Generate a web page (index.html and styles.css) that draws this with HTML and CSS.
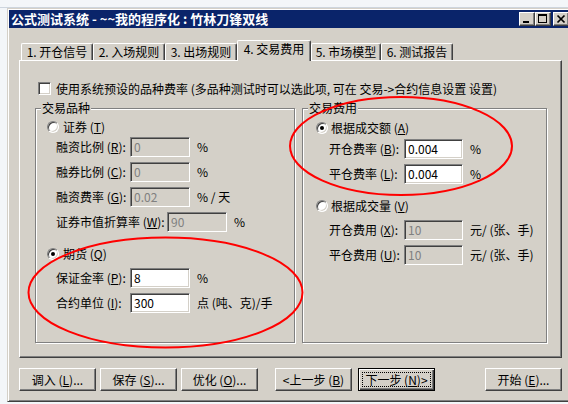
FILE: index.html
```html
<html lang="zh">

<head>
    <title>公式测试系统</title>
    <link rel="stylesheet" href="styles.css">
</head>

<body>
    <div class="window">
        <div class="titlebar">
            <span class="caption">公式测试系统 - ~~我的程序化 : 竹林刀锋双线</span>
            <span class="tbtn">
                <svg width="14" height="12" viewBox="0 0 14 12"><rect x="3" y="8" width="6" height="2" fill="#000"/></svg>
            </span>
            <span class="tbtn">
                <svg width="14" height="12" viewBox="0 0 14 12"><path d="M2 1h9v9H2z M3 3v6h7V3z" fill="#000" fill-rule="evenodd"/></svg>
            </span>
            <span class="tbtn close">
                <svg width="14" height="12" viewBox="0 0 14 12"><path d="M3.5 2.5l7 7M10.5 2.5l-7 7" stroke="#000" stroke-width="1.7"/></svg>
            </span>
        </div>

        <div class="main">
            <div class="tabs">
                <div class="tab">1. 开仓信号</div>
                <div class="tab">2. 入场规则</div>
                <div class="tab">3. 出场规则</div>
                <div class="tab active">4. 交易费用</div>
                <div class="tab narrow">5. 市场模型</div>
                <div class="tab">6. 测试报告</div>
            </div>

            <div class="panel">
                <div class="check-row">
                    <span class="checkbox"></span>
                    <span>使用系统预设的品种费率 (多品种测试时可以选此项, 可在 交易-&gt;合约信息设置 设置)</span>
                </div>

                <div class="groups">
                    <div class="group left">
                        <div class="group-title">交易品种</div>
                        <div class="radio-row first">
                            <span class="radio"></span>
                            <span>证券 (<u>T</u>)</span>
                        </div>
                        <div class="field top">
                            <label>融资比例 (<u>R</u>):</label>
                            <input class="box" type="text" value="0" disabled>
                            <span class="unit">%</span>
                        </div>
                        <div class="field">
                            <label>融券比例 (<u>C</u>):</label>
                            <input class="box" type="text" value="0" disabled>
                            <span class="unit">%</span>
                        </div>
                        <div class="field">
                            <label>融资费率 (<u>G</u>):</label>
                            <input class="box" type="text" value="0.02" disabled>
                            <span class="unit">% / 天</span>
                        </div>
                        <div class="field">
                            <label class="wide">证券市值折算率 (<u>W</u>):</label>
                            <input class="box" type="text" value="90" disabled>
                            <span class="unit">%</span>
                        </div>
                        <div class="radio-row">
                            <span class="radio on"></span>
                            <span>期货 (<u>Q</u>)</span>
                        </div>
                        <div class="field after-radio">
                            <label>保证金率 (<u>P</u>):</label>
                            <input class="box" type="text" value="8">
                            <span class="unit">%</span>
                        </div>
                        <div class="field">
                            <label>合约单位 (<u>I</u>):</label>
                            <input class="box" type="text" value="300">
                            <span class="unit">点 (吨、克)/手</span>
                        </div>
                    </div>

                    <div class="group right">
                        <div class="group-title">交易费用</div>
                        <div class="radio-row first">
                            <span class="radio on"></span>
                            <span>根据成交额 (<u>A</u>)</span>
                        </div>
                        <div class="field top">
                            <label>开仓费率 (<u>B</u>):</label>
                            <input class="box" type="text" value="0.004">
                            <span class="unit">%</span>
                        </div>
                        <div class="field">
                            <label>平仓费率 (<u>L</u>):</label>
                            <input class="box" type="text" value="0.004">
                            <span class="unit">%</span>
                        </div>
                        <div class="radio-row">
                            <span class="radio"></span>
                            <span>根据成交量 (<u>V</u>)</span>
                        </div>
                        <div class="field after-radio">
                            <label>开仓费用 (<u>X</u>):</label>
                            <input class="box" type="text" value="10" disabled>
                            <span class="unit">元/ (张、手)</span>
                        </div>
                        <div class="field">
                            <label>平仓费用 (<u>U</u>):</label>
                            <input class="box" type="text" value="10" disabled>
                            <span class="unit">元/ (张、手)</span>
                        </div>
                    </div>
                </div>
            </div>

            <div class="actions">
                <button class="btn">调入 (<u>L</u>)...</button>
                <button class="btn">保存 (<u>S</u>)...</button>
                <button class="btn">优化 (<u>O</u>)...</button>
                <button class="btn prev">&lt;上一步 (<u>B</u>)</button>
                <button class="btn next"><span class="focus">下一步 (<u>N</u>)&gt;</span></button>
                <button class="btn start">开始 (<u>E</u>)...</button>
            </div>
        </div>
    </div>

    <!-- red marks drawn over the screenshot -->
    <svg class="marks" width="568" height="404" viewBox="0 0 568 404">
        <ellipse cx="165.5" cy="292.5" rx="137" ry="55" fill="none" stroke="#ff0000" stroke-width="2"/>
        <ellipse cx="401" cy="146" rx="111" ry="49" fill="none" stroke="#ff0000" stroke-width="2"/>
    </svg>
</body>

</html>
```

FILE: styles.css
```css
* {
    box-sizing: border-box;
}

body {
    margin: 0;
    width: 568px;
    height: 404px;
    overflow: hidden;
    position: relative;
    background: linear-gradient(#f3f6f9 0 7px, #cdd5de 7px 8px, #f3f6f9 8px);
    font-family: "Noto Sans CJK SC", "Liberation Sans", sans-serif;
    font-size: 12px;
    line-height: 14px;
    color: #000;
}

.window {
    margin: 8px 0 0 7px;
    width: 567px;
    height: 394px;
    padding: 1px;
    background: #d4d0c8;
    border: 1px solid;
    border-color: #d4d0c8 #404040 #404040 #d4d0c8;
    box-shadow: inset 1px 1px #fff, inset -1px -1px #808080;
}

.titlebar {
    height: 18px;
    display: flex;
    align-items: center;
    padding: 0 3px 0 2px;
    background: #0a246a;
    color: #fff;
    font-size: 13px;
    font-weight: bold;
}

.caption {
    flex: 1;
    white-space: nowrap;
}

.tbtn {
    width: 16px;
    height: 14px;
    display: flex;
    background: #d4d0c8;
    border: 1px solid;
    border-color: #fff #404040 #404040 #fff;
    box-shadow: inset -1px -1px #808080;
}

.tbtn.close {
    margin-left: 2px;
}

.main {
    padding: 12px 10px 0;
}

/* tab strip */
.tabs {
    position: relative;
    z-index: 1;
    height: 20px;
    display: flex;
    align-items: flex-end;
    padding-left: 2px;
}

.tab {
    width: 72px;
    height: 17px;
    border: 1px solid;
    border-bottom: none;
    border-color: #fff #404040 #fff #fff;
    border-radius: 2px 2px 0 0;
    box-shadow: inset -1px 0 #808080;
    background: #d4d0c8;
    text-align: center;
    line-height: 16px;
    white-space: nowrap;
}

.tab.narrow {
    width: 70px;
}

.tab.active {
    width: 74px;
    height: 21px;
    margin-bottom: -1px;
    line-height: 16px;
}

.panel {
    height: 298px;
    padding: 21px 14px 0 15px;
    border: 1px solid;
    border-color: #fff #404040 #404040 #fff;
    box-shadow: inset -1px -1px #808080;
}

.check-row {
    height: 13px;
    display: flex;
    align-items: center;
    gap: 5px;
    margin-left: 3px;
    white-space: nowrap;
}

.checkbox {
    width: 13px;
    height: 13px;
    flex: none;
    background: #fff;
    border: 1px solid;
    border-color: #808080 #fff #fff #808080;
    box-shadow: inset 1px 1px #404040, inset -1px -1px #d4d0c8;
}

/* group boxes */
.groups {
    display: flex;
    gap: 7px;
    margin-top: 13px;
}

.group {
    height: 235px;
    border: 1px solid #808080;
    box-shadow: inset 1px 1px #fff, 1px 1px #fff;
}

.group.left {
    width: 260px;
}

.group.right {
    width: 245px;
}

.group-title {
    width: fit-content;
    margin: -8px 0 -6px 5px;
    padding: 0 1px;
    background: #d4d0c8;
}

.radio-row {
    height: 14px;
    display: flex;
    align-items: center;
    gap: 4px;
    margin: 15px 0 0 11px;
}

.radio-row.first {
    margin-top: 11px;
}

.right .radio-row {
    margin-left: 13px;
    gap: 3px;
}

.right .radio-row.first {
    margin-top: 12px;
}

.radio {
    width: 12px;
    height: 12px;
    flex: none;
    display: flex;
    align-items: center;
    justify-content: center;
    border-radius: 50%;
    background: #fff;
    border: 1px solid;
    border-color: #808080 #fff #fff #808080;
    box-shadow: inset 1px 1px #404040, inset -1px -1px #d4d0c8;
}

.radio.on::after {
    content: "";
    width: 4px;
    height: 4px;
    border-radius: 50%;
    background: #000;
}

.field {
    height: 20px;
    display: flex;
    align-items: center;
    margin: 5px 0 0 20px;
    white-space: nowrap;
}

.field.top {
    margin-top: 3px;
}

.field.after-radio {
    margin-top: 7px;
}

.right .field {
    margin-left: 26px;
}

.right .field.top {
    margin-top: 4px;
}

.field label {
    width: 74px;
    flex: none;
}

.field label.wide {
    width: 111px;
}

.right .field label {
    width: 75px;
}

.box {
    width: 60px;
    height: 20px;
    flex: none;
    margin: 0;
    padding: 0 3px 2px;
    font: inherit;
    color: #000;
    background: #fff;
    border: 1px solid;
    border-color: #808080 #fff #fff #808080;
    box-shadow: inset 1px 1px #404040, inset -1px -1px #d4d0c8;
    outline: none;
}

.right .box {
    width: 59px;
}

.box:disabled {
    color: #808080;
    background: #d4d0c8;
}

.unit {
    margin-left: 7px;
}

/* bottom buttons */
.actions {
    display: flex;
    margin-top: 10px;
}

.btn {
    width: 77px;
    height: 23px;
    padding: 0;
    font: inherit;
    color: #000;
    background: #d4d0c8;
    border: 1px solid;
    border-color: #fff #404040 #404040 #fff;
    box-shadow: inset -1px -1px #808080;
    white-space: nowrap;
}

.btn + .btn {
    margin-left: 4px;
}

.btn.prev {
    margin-left: 17px;
}

.btn.next {
    margin-left: 6px;
    border-color: #000;
    box-shadow: inset 1px 1px #fff, inset -1px -1px #404040, inset -2px -2px #808080;
}

.btn.next .focus {
    display: block;
    margin: 0 3px;
    border: 1px dotted #000;
    line-height: 13px;
}

.btn.start {
    margin-left: auto;
}

.marks {
    position: absolute;
    top: 0;
    left: 0;
    pointer-events: none;
}
```
